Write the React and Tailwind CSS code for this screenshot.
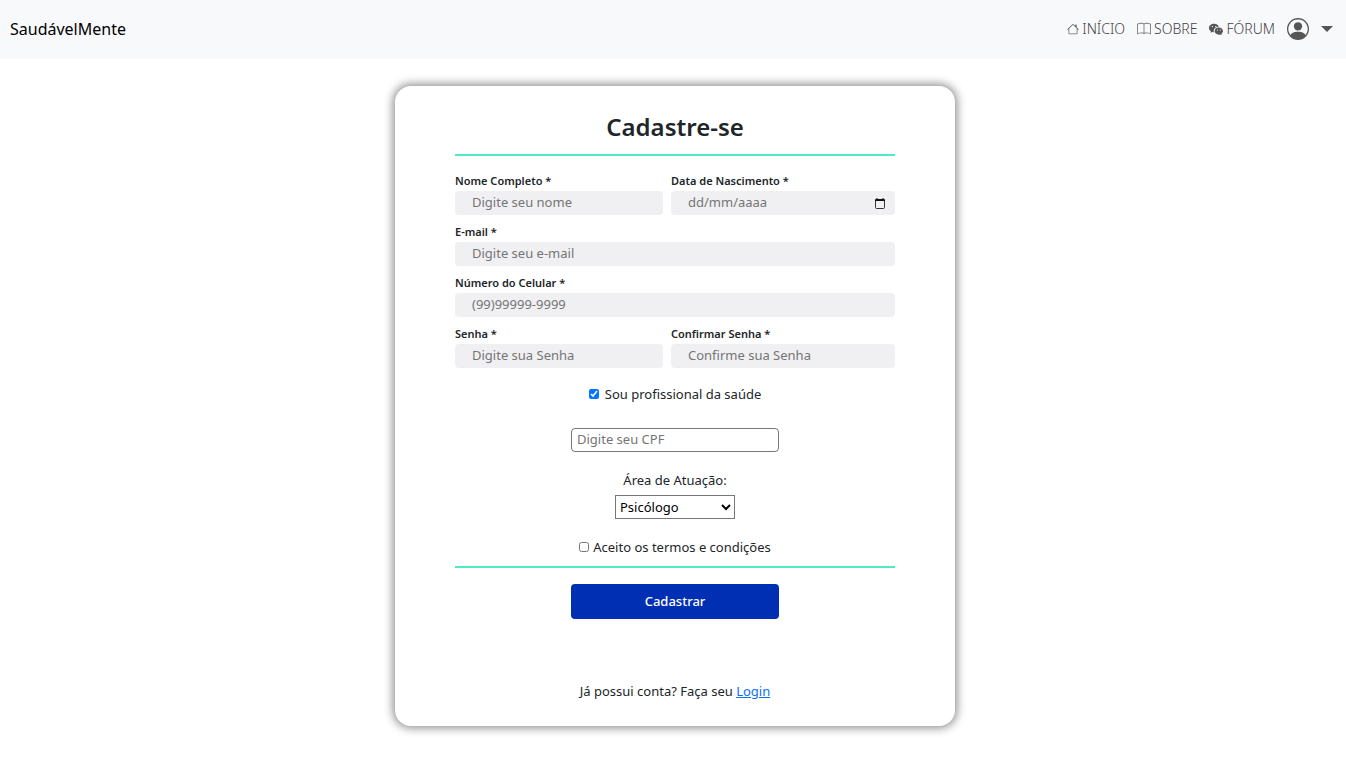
import { useState } from "react";
import { BsBook, BsHouse, BsPersonCircle, BsWechat } from "react-icons/bs";

function Field({ id, label, type = "text", placeholder, children }) {
  return (
    <div className="flex min-w-0 flex-col gap-0.5">
      <label htmlFor={id} className="text-[11px] leading-4 font-semibold text-[#212529]">
        {label}
      </label>
      <div className="flex h-6 items-center rounded bg-[#f0f0f2] pr-2.5">
        <input
          id={id}
          type={type}
          placeholder={placeholder}
          className="h-6 w-full min-w-0 bg-transparent pb-0.5 pl-[17px] text-[13px] outline-none placeholder:text-[#757575]"
        />
        {children}
      </div>
    </div>
  );
}

function CalendarIcon() {
  return (
    <svg viewBox="0 0 10 11" className="h-[11px] w-2.5" aria-hidden="true">
      <path fill="none" stroke="#333" strokeWidth="1" d="M0.5 3v6.5a1 1 0 0 0 1 1h7a1 1 0 0 0 1-1V3" />
      <path fill="#111" d="M1.5 0h1v1h5V0h1v1H9a1 1 0 0 1 1 1v1H0V2a1 1 0 0 1 1-1h.5Z" />
    </svg>
  );
}

function NavLink({ icon: Icon, iconClass = "size-3.5 text-[#555]", children }) {
  return (
    <a href="#" className="flex items-center gap-[3px] text-sm font-light text-[#444]">
      <Icon className={iconClass} aria-hidden="true" />
      {children}
    </a>
  );
}

export default function App() {
  const [professional, setProfessional] = useState(true);

  return (
    <div className="min-h-screen bg-white font-['Noto_Sans',sans-serif] text-[13px] leading-5 text-[#212529]">
      <header className="flex h-[59px] items-center justify-between bg-[#f8f9fa] pr-[13px] pb-0.5 pl-2.5">
        <a href="#" className="text-base text-black">
          SaudávelMente
        </a>
        <nav className="flex items-center gap-3">
          <NavLink icon={BsHouse} iconClass="size-3 text-[#666]">
            INÍCIO
          </NavLink>
          <NavLink icon={BsBook} iconClass="size-3.5 text-[#777]">
            SOBRE
          </NavLink>
          <NavLink icon={BsWechat}>FÓRUM</NavLink>
          <button type="button" aria-label="Conta" className="flex items-center gap-3 text-[#555]">
            <BsPersonCircle className="size-[22px]" />
            <svg viewBox="0 0 12 6" className="h-1.5 w-3" aria-hidden="true">
              <path fill="currentColor" d="M0 0h12L6 6Z" />
            </svg>
          </button>
        </nav>
      </header>

      <main className="flex justify-center pt-[27px] pr-4 pb-10 pl-5">
        <form
          onSubmit={(e) => e.preventDefault()}
          className="flex w-full max-w-[560px] flex-col items-center rounded-2xl bg-white px-[60px] pt-[25px] pb-[25px] shadow-[0_0_10px_2px_rgba(0,0,0,0.45)]"
        >
          <h1 className="w-full border-b-2 border-[#4feac6] pb-[11px] text-center text-2xl leading-8 font-semibold">
            Cadastre-se
          </h1>

          <div className="mt-[17px] flex w-full flex-col gap-[9px]">
            <div className="grid grid-cols-[13fr_14fr] gap-2">
              <Field id="nome" label="Nome Completo *" placeholder="Digite seu nome" />
              <Field id="nascimento" label="Data de Nascimento *" placeholder="dd/mm/aaaa">
                <button type="button" aria-label="Abrir calendário">
                  <CalendarIcon />
                </button>
              </Field>
            </div>
            <Field id="email" label="E-mail *" type="email" placeholder="Digite seu e-mail" />
            <Field id="celular" label="Número do Celular *" type="tel" placeholder="(99)99999-9999" />
            <div className="grid grid-cols-[13fr_14fr] gap-2">
              <Field id="senha" label="Senha *" type="password" placeholder="Digite sua Senha" />
              <Field id="confirmar" label="Confirmar Senha *" type="password" placeholder="Confirme sua Senha" />
            </div>
          </div>

          <label className="mt-4 flex items-center gap-1.5">
            <input
              type="checkbox"
              checked={professional}
              onChange={(e) => setProfessional(e.target.checked)}
              className="size-2.5"
            />
            Sou profissional da saúde
          </label>

          {professional && (
            <>
              <input
                type="text"
                aria-label="CPF"
                placeholder="Digite seu CPF"
                className="mt-6 h-6 w-52 rounded border border-[#767683] px-[5px] pb-0.5 placeholder:text-[#757575]"
              />
              <label htmlFor="area" className="mt-[18px]">
                Área de Atuação:
              </label>
              <select
                id="area"
                defaultValue="Psicólogo"
                className="mt-[5px] h-6 w-[120px] border border-[#767676] bg-white text-black"
              >
                <option>Psicólogo</option>
                <option>Psiquiatra</option>
              </select>
            </>
          )}

          <div className="mt-[18px] flex w-full justify-center border-b-2 border-[#4feac6] pb-[9px]">
            <label className="flex items-center gap-1">
              <input type="checkbox" className="size-2.5" />
              Aceito os termos e condições
            </label>
          </div>

          <button type="submit" className="mt-4 h-[35px] w-52 rounded bg-[#002fb3] pb-0.5 font-medium text-white">
            Cadastrar
          </button>

          <p className="mt-[62px]">
            Já possui conta? Faça seu{" "}
            <a href="#" className="text-[#0d6efd] underline">
              Login
            </a>
          </p>
        </form>
      </main>
    </div>
  );
}
